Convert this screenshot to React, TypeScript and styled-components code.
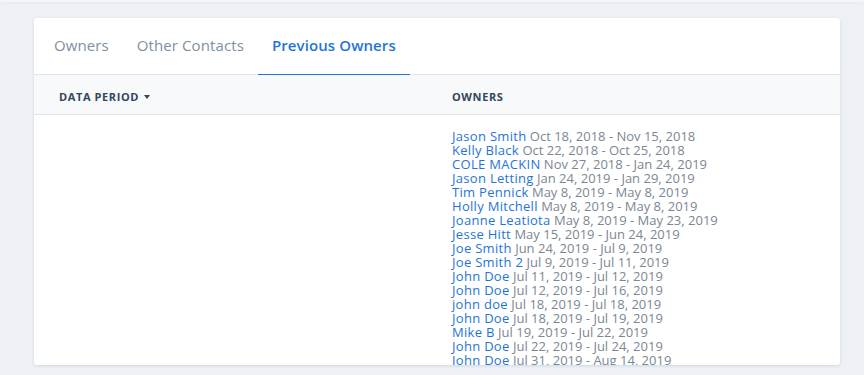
import React from "react";
import styled, { createGlobalStyle } from "styled-components";

const GlobalStyle = createGlobalStyle`
  html, body { margin: 0; padding: 0; }
  body {
    background: #edf1f5;
    font-family: "Open Sans", "Liberation Sans", sans-serif;
    -webkit-font-smoothing: antialiased;
    overflow: hidden;
  }
`;

const Page = styled.div`
  height: 375px;
  display: flex;
  flex-direction: column;
`;

const TopStrip = styled.div`
  height: 2px;
  background: #f3f5f8;
  box-shadow: 0 1px 3px rgba(45, 62, 80, 0.05);
`;

const Card = styled.section`
  margin: 16px 24px 0 34px;
  height: 347px;
  background: #fff;
  border-radius: 3px;
  box-shadow: 0 1px 3px rgba(45, 62, 80, 0.14);
  display: flex;
  flex-direction: column;
  overflow: hidden;
`;

const TabBar = styled.nav`
  display: flex;
  padding: 0 0 0 6px;
  height: 56px;
  border-bottom: 1px solid #dfe5ee;
  flex-shrink: 0;
`;

const Tab = styled.div<{ $active?: boolean }>`
  display: flex;
  align-items: center;
  padding: 0 14px 3px;
  font-size: 15px;
  font-weight: ${(p) => (p.$active ? 600 : 400)};
  color: ${(p) => (p.$active ? "#1f74d9" : "#7e8fa3")};
  border-bottom: 1px solid ${(p) => (p.$active ? "#1f74d9" : "transparent")};
  margin-bottom: -1px;
  letter-spacing: 0.1px;
`;

const HeaderRow = styled.div`
  display: grid;
  grid-template-columns: 393px 1fr;
  padding-left: 25px;
  height: 39px;
  align-items: center;
  background: #f7f9fb;
  border-bottom: 1px solid #dfe5ee;
  flex-shrink: 0;
`;

const HeaderCell = styled.div`
  display: flex;
  align-items: center;
  gap: 5px;
  font-size: 11px;
  font-weight: 700;
  letter-spacing: 0.6px;
  color: #33475b;
  text-transform: uppercase;
  padding-top: 3px;
`;

const Caret = styled.span`
  width: 0;
  height: 0;
  border-left: 3.5px solid transparent;
  border-right: 3.5px solid transparent;
  border-top: 4px solid #33475b;
  margin-top: 2px;
`;

const BodyRow = styled.div`
  display: grid;
  grid-template-columns: 393px 1fr;
  padding: 14px 0 0 25px;
`;

const OwnerList = styled.ul`
  list-style: none;
  margin: 0;
  padding: 0;
`;

const OwnerItem = styled.li`
  font-size: 13px;
  line-height: 14px;
  color: #7b8794;
  white-space: nowrap;
  letter-spacing: 0px;
`;

const OwnerName = styled.a`
  color: #1f74d9;
  text-decoration: none;
  letter-spacing: 0.3px;
`;

const owners: [string, string][] = [
  ["Jason Smith", "Oct 18, 2018 - Nov 15, 2018"],
  ["Kelly Black", "Oct 22, 2018 - Oct 25, 2018"],
  ["COLE MACKIN", "Nov 27, 2018 - Jan 24, 2019"],
  ["Jason Letting", "Jan 24, 2019 - Jan 29, 2019"],
  ["Tim Pennick", "May 8, 2019 - May 8, 2019"],
  ["Holly Mitchell", "May 8, 2019 - May 8, 2019"],
  ["Joanne Leatiota", "May 8, 2019 - May 23, 2019"],
  ["Jesse Hitt", "May 15, 2019 - Jun 24, 2019"],
  ["Joe Smith", "Jun 24, 2019 - Jul 9, 2019"],
  ["Joe Smith 2", "Jul 9, 2019 - Jul 11, 2019"],
  ["John Doe", "Jul 11, 2019 - Jul 12, 2019"],
  ["John Doe", "Jul 12, 2019 - Jul 16, 2019"],
  ["john doe", "Jul 18, 2019 - Jul 18, 2019"],
  ["John Doe", "Jul 18, 2019 - Jul 19, 2019"],
  ["Mike B", "Jul 19, 2019 - Jul 22, 2019"],
  ["John Doe", "Jul 22, 2019 - Jul 24, 2019"],
  ["John Doe", "Jul 31, 2019 - Aug 14, 2019"],
  ["John Doe", "Aug 14, 2019 - Aug 20, 2019"],
];

export default function App() {
  return (
    <>
      <GlobalStyle />
      <Page>
        <TopStrip />
        <Card>
          <TabBar>
            <Tab>Owners</Tab>
            <Tab>Other Contacts</Tab>
            <Tab $active>Previous Owners</Tab>
          </TabBar>
          <HeaderRow>
            <HeaderCell>
              Data Period <Caret />
            </HeaderCell>
            <HeaderCell>Owners</HeaderCell>
          </HeaderRow>
          <BodyRow>
            <div />
            <OwnerList>
              {owners.map(([name, period], i) => (
                <OwnerItem key={i}>
                  <OwnerName href="#">{name}</OwnerName> {period}
                </OwnerItem>
              ))}
            </OwnerList>
          </BodyRow>
        </Card>
      </Page>
    </>
  );
}
